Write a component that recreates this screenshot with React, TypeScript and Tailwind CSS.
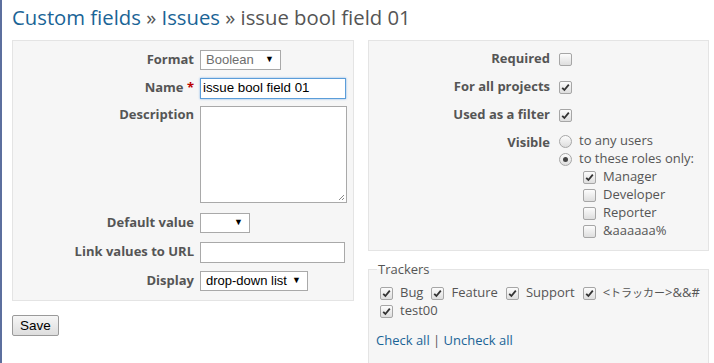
import React from "react";

const font = { fontFamily: "'Open Sans', 'Noto Sans CJK JP', sans-serif" };
const inputFont = { fontFamily: "'Liberation Sans', Arial, sans-serif" };

function Check({ checked = false }: { checked?: boolean }) {
  return (
    <span className="inline-flex h-[13px] w-[13px] shrink-0 items-center justify-center rounded-[2px] border border-[#a6a6a6] bg-gradient-to-b from-[#fcfcfc] to-[#dedede]">
      {checked && (
        <svg width="9" height="9" viewBox="0 0 9 9">
          <path d="M1.2 4.8 L3.4 7 L7.8 1.6" fill="none" stroke="#333" strokeWidth="1.8" />
        </svg>
      )}
    </span>
  );
}

function Radio({ checked = false }: { checked?: boolean }) {
  return (
    <span className="inline-flex h-[13px] w-[13px] shrink-0 items-center justify-center rounded-full border border-[#a6a6a6] bg-gradient-to-b from-[#fcfcfc] to-[#dedede]">
      {checked && <span className="h-[5px] w-[5px] rounded-full bg-[#444]" />}
    </span>
  );
}

function Select({ value, width, muted = false }: { value: string; width: string; muted?: boolean }) {
  return (
    <span
      className={`flex h-[20px] items-center justify-between border border-[#a9a9a9] bg-white pl-[5px] pr-[6px] text-[13px] ${width} ${muted ? "text-[#6d6d6d]" : "text-black"}`}
      style={inputFont}
    >
      <span>{value}</span>
      <span className="text-[9px] text-black">▼</span>
    </span>
  );
}

function Row({ label, h, children, top = false, req = false }: any) {
  return (
    <div className={`flex ${top ? "items-start" : "items-center"} ${h}`}>
      <label className={`w-[187px] shrink-0 pr-[6px] text-right text-[13px] font-bold text-[#555] ${top ? "pt-[3px]" : ""}`}>
        {label}
        {req && <span className="text-[#bb0000]"> *</span>}
      </label>
      {children}
    </div>
  );
}

function RightRow({ label, h, children }: any) {
  return (
    <div className={`flex items-center ${h}`}>
      <label className="w-[190px] shrink-0 pr-[9px] text-right text-[13px] font-bold text-[#555]">{label}</label>
      {children}
    </div>
  );
}

function Tracker({ children }: { children: React.ReactNode }) {
  return (
    <span className="mr-[8px] flex items-center gap-[7px] whitespace-nowrap">
      <Check checked />
      <span>{children}</span>
    </span>
  );
}

export default function App() {
  return (
    <div className="min-h-[363px] border-l-2 border-[#5c6f9e] bg-white pl-[10px] pr-[4px] pt-[6px]" style={font}>
      <h2 className="h-[34px] text-[20.3px] leading-[22px] text-[#555]">
        <span className="text-[#1a6496]">Custom fields</span> » <span className="text-[#1a6496]">Issues</span> » issue bool field 01
      </h2>

      <div className="flex gap-[14px]">
        {/* left column */}
        <div className="w-[342px] shrink-0">
          <div className="border border-[#e4e4e4] bg-[#f6f6f6] pt-[5px] pb-[5px]">
            <Row label="Format" h="h-[28px]">
              <Select value="Boolean" width="w-[81px]" muted />
            </Row>
            <Row label="Name" h="h-[28px]" req>
              <span
                className="flex h-[21px] w-[146px] items-center border border-[#5b9dd9] bg-white px-[2px] text-[13.3px] text-black shadow-[0_0_2px_#7fb0e6]"
                style={inputFont}
              >
                issue bool field 01
              </span>
            </Row>
            <Row label="Description" h="h-[107px]" top>
              <span className="relative mt-[4px] block h-[97px] w-[147px] border border-[#a9a9a9] bg-white">
                <svg className="absolute bottom-[1px] right-[1px]" width="8" height="8" viewBox="0 0 8 8">
                  <path d="M7 2 L2 7 M7 5 L5 7" stroke="#888" strokeWidth="1" />
                </svg>
              </span>
            </Row>
            <Row label="Default value" h="h-[28px]">
              <Select value="" width="w-[50px]" />
            </Row>
            <Row label="Link values to URL" h="h-[30px]">
              <span className="block h-[21px] w-[145px] border border-[#a9a9a9] bg-white" />
            </Row>
            <Row label="Display" h="h-[28px]">
              <Select value="drop-down list" width="w-[108px]" />
            </Row>
          </div>
          <button
            className="mt-[14px] h-[21px] rounded-[2px] border border-[#9a9a9a] bg-gradient-to-b from-[#f6f6f6] to-[#dddddd] px-[7px] text-[13.5px] leading-[19px] text-black"
            style={inputFont}
          >
            Save
          </button>
        </div>

        {/* right column */}
        <div className="w-[341px] min-w-0 shrink-0">
          <div className="border border-[#e4e4e4] bg-[#f6f6f6] pt-[4px] pb-[10px] text-[13px] text-[#555]">
            <RightRow label="Required" h="h-[28px]">
              <Check />
            </RightRow>
            <RightRow label="For all projects" h="h-[28px]">
              <Check checked />
            </RightRow>
            <RightRow label="Used as a filter" h="h-[28px]">
              <Check checked />
            </RightRow>
            <div className="mt-[3px] flex items-start">
              <label className="w-[190px] shrink-0 pr-[9px] pt-[1px] text-right font-bold">Visible</label>
              <div className="flex flex-col">
                {[
                  ["to any users", false],
                  ["to these roles only:", true],
                ].map(([t, c]: any) => (
                  <div key={t} className="flex h-[18px] items-center gap-[7px]">
                    <Radio checked={c} />
                    <span>{t}</span>
                  </div>
                ))}
                {[
                  ["Manager", true],
                  ["Developer", false],
                  ["Reporter", false],
                  ["&aaaaaa%", false],
                ].map(([t, c]: any) => (
                  <div key={t} className="ml-[24px] flex h-[18px] items-center gap-[7px]">
                    <Check checked={c} />
                    <span>{t}</span>
                  </div>
                ))}
              </div>
            </div>
          </div>

          <fieldset className="mt-[9px] min-w-0 overflow-hidden border border-[#e4e4e4] bg-[#f6f6f6] pl-[11px] pr-[2px] pb-[20px] text-[13px] text-[#555]">
            <legend className="ml-[-3px] px-[1px] text-[13px]">Trackers</legend>
            <div className="mt-[7px] flex h-[13px] items-center">
              <Tracker>Bug</Tracker>
              <Tracker>Feature</Tracker>
              <Tracker>Support</Tracker>
              <Tracker>
                &lt;<span className="text-[11px]">トラッカー</span>&gt;&amp;&amp;#
              </Tracker>
            </div>
            <div className="mt-[5px] flex h-[13px] items-center">
              <Tracker>test00</Tracker>
            </div>
            <div className="ml-[-4px] mt-[13px] text-[#1a6496]">
              Check all <span className="text-[#555]">|</span> Uncheck all
            </div>
          </fieldset>
        </div>
      </div>
    </div>
  );
}
